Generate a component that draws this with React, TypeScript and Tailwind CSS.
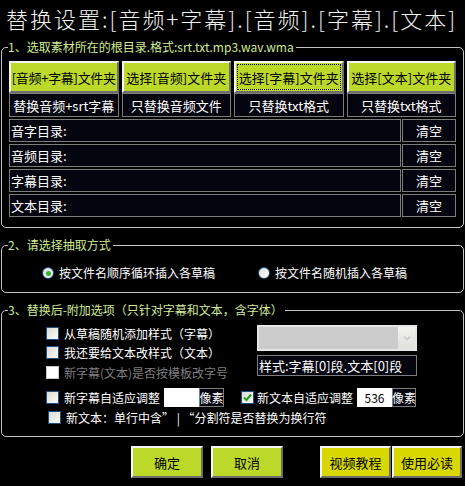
import { ReactNode } from "react";

const font = { fontFamily: '"Noto Sans CJK SC", "Liberation Sans", sans-serif' };

const Group = ({ label, className, children }: { label: string; className?: string; children: ReactNode }) => (
  <fieldset className={`ml-[1px] w-[463px] border border-[#c4c4c4] rounded-[5px] ${className ?? ""}`}>
    <legend className="ml-[6px] pr-[2px] text-[12px] leading-[14px] text-[#d2ea96] whitespace-nowrap">{label}</legend>
    {children}
  </fieldset>
);

const LimeButton = ({ children, focused, className }: { children: ReactNode; focused?: boolean; className?: string }) => (
  <button
    className={`flex items-center justify-center whitespace-nowrap overflow-visible border-2 border-t-[#f4f4f4] border-l-[#f4f4f4] border-r-[#6e6e6e] border-b-[#6e6e6e] text-black text-[13px] leading-none ${className ?? "bg-[#bcd92a]"}`}
  >
    {focused ? (
      <span className="flex items-center justify-center w-full h-full border border-dotted border-black">{children}</span>
    ) : (
      children
    )}
  </button>
);

const DarkCell = ({ children, className }: { children: ReactNode; className?: string }) => (
  <div className={`flex items-center whitespace-nowrap border border-[#7c7c7c] bg-[#05050f] text-white text-[12px] leading-none ${className ?? ""}`}>
    {children}
  </div>
);

const Check = ({ checked, disabled }: { checked?: boolean; disabled?: boolean }) => (
  <span
    className={`w-[13px] h-[13px] shrink-0 border border-[#1c5180] flex items-center justify-center ${
      disabled ? "bg-white border-[#c8c8c8]" : "bg-gradient-to-br from-[#dcdcd6] to-[#fbfbf8]"
    }`}
  >
    {checked && (
      <svg width="9" height="9" viewBox="0 0 9 9">
        <path d="M1 4.5 L3.5 7 L8 1.5" stroke="#21a121" strokeWidth="2" fill="none" />
      </svg>
    )}
  </span>
);

const Radio = ({ checked }: { checked?: boolean }) => (
  <span className="w-[12px] h-[12px] shrink-0 rounded-full border border-[#1c5180] bg-gradient-to-br from-[#dcdcd6] to-white flex items-center justify-center">
    {checked && <span className="w-[5px] h-[5px] rounded-full bg-[#2fb42f]" />}
  </span>
);

export default function App() {
  const dirs = ["音字目录:", "音频目录:", "字幕目录:", "文本目录:"];

  return (
    <div className="w-[465px] h-[486px] bg-black overflow-hidden" style={font}>
      {/* title */}
      <div className="h-[40px] pl-[6px] pt-[3px] text-[22px] leading-[30px] tracking-[2px] font-light text-[#f2f2f2] whitespace-nowrap">
        替换设置:[音频+字幕].[音频].[字幕].[文本]
      </div>

      {/* 1 */}
      <Group label="1、选取素材所在的根目录.格式:srt.txt.mp3.wav.wma" className="h-[188px]">
        <div className="w-[447px] ml-[7px] mt-[7px] flex flex-col">
          <div className="grid grid-cols-4 gap-[3px] h-[32px]">
            <LimeButton className="bg-[#bcd92a] tracking-[-0.3px]">[音频+字幕]文件夹</LimeButton>
            <LimeButton>选择[音频]文件夹</LimeButton>
            <LimeButton focused className="bg-[#bcd92a] p-[1px]">选择[字幕]文件夹</LimeButton>
            <LimeButton>选择[文本]文件夹</LimeButton>
          </div>
          <div className="grid grid-cols-4 gap-[3px] h-[24px]">
            {["替换音频+srt字幕", "只替换音频文件", "只替换txt格式", "只替换txt格式"].map((t, i) => (
              <DarkCell key={i} className="justify-center text-[13px]">{t}</DarkCell>
            ))}
          </div>
          <div className="flex flex-col gap-[2px] mt-[2px]">
            {dirs.map((d) => (
              <div key={d} className="flex gap-[1px] h-[23px]">
                <DarkCell className="w-[392px] pl-[1px] text-[13px]">{d}</DarkCell>
                <DarkCell className="flex-1 justify-center text-[13px]">清空</DarkCell>
              </div>
            ))}
          </div>
        </div>
      </Group>

      {/* 2 */}
      <Group label="2、请选择抽取方式" className="mt-[10px] h-[55px]">
        <div className="flex items-center h-[34px] mt-[4px] pl-[40px] text-[12px] text-white whitespace-nowrap">
          <div className="flex items-center gap-[5px] w-[216px]">
            <Radio checked />
            <span>按文件名顺序循环插入各草稿</span>
          </div>
          <div className="flex items-center gap-[5px]">
            <Radio />
            <span>按文件名随机插入各草稿</span>
          </div>
        </div>
      </Group>

      {/* 3 */}
      <Group label="3、替换后-附加选项（只针对字幕和文本，含字体）" className="mt-[10px] h-[134px]">
        <div className="flex pl-[44px] pt-[7px] text-[12px] text-white whitespace-nowrap">
          <div className="flex flex-col w-[211px]">
            <div className="flex items-center gap-[5px] h-[19px]">
              <Check />
              <span>从草稿随机添加样式（字幕）</span>
            </div>
            <div className="flex items-center gap-[5px] h-[19px]">
              <Check />
              <span>我还要给文本改样式（文本）</span>
            </div>
            <div className="flex items-center gap-[5px] h-[21px]">
              <Check disabled />
              <span className="text-[#7f7f7f]">新字幕(文本)是否按模板改字号</span>
            </div>
          </div>
          <div className="flex flex-col gap-[4px] pt-[1px]">
            <div className="flex w-[160px] h-[26px] border-2 border-[#e6e6e6] bg-[#cbcbcb]">
              <div className="flex-1" />
              <div className="w-[17px] bg-gradient-to-b from-[#f4f4ef] to-[#e0e0da] flex items-center justify-center">
                <svg width="8" height="6" viewBox="0 0 8 6">
                  <path d="M1 1.5 L4 4.5 L7 1.5" stroke="#c8c8c8" strokeWidth="1.6" fill="none" />
                </svg>
              </div>
            </div>
            <DarkCell className="w-[160px] h-[21px] pl-[1px] text-[13px]">样式:字幕[0]段.文本[0]段</DarkCell>
          </div>
        </div>

        <div className="flex items-center h-[19px] mt-[5px] pl-[44px] text-[12px] text-white whitespace-nowrap">
          <Check />
          <span className="ml-[5px] w-[100px]">新字幕自适应调整</span>
          <div className="w-[35px] h-[19px] bg-white" />
          <DarkCell className="w-[25px] h-[19px] justify-center text-[12px]">像素</DarkCell>
          <span className="ml-[17px]">
            <Check checked />
          </span>
          <span className="ml-[3px] w-[100px]">新文本自适应调整</span>
          <div className="w-[35px] h-[19px] bg-white text-black text-[12px] flex items-center justify-center">536</div>
          <DarkCell className="w-[24px] h-[19px] justify-center text-[12px]">像素</DarkCell>
        </div>

        <div className="flex items-center gap-[5px] h-[19px] mt-[1px] pl-[46px] text-[12px] text-white whitespace-nowrap">
          <Check />
          <span>新文本：单行中含” | “分割符是否替换为换行符</span>
        </div>
      </Group>

      {/* bottom buttons */}
      <div className="flex h-[32px] mt-[9px] pl-[131px]">
        <LimeButton className="w-[72px] bg-[#bcd92a]">确定</LimeButton>
        <LimeButton className="w-[72px] ml-[8px] bg-[#bcd92a]">取消</LimeButton>
        <LimeButton className="w-[71px] ml-[37px] bg-[#d8d800]">视频教程</LimeButton>
        <LimeButton className="w-[70px] ml-[1px] bg-[#d8d800]">使用必读</LimeButton>
      </div>
    </div>
  );
}
